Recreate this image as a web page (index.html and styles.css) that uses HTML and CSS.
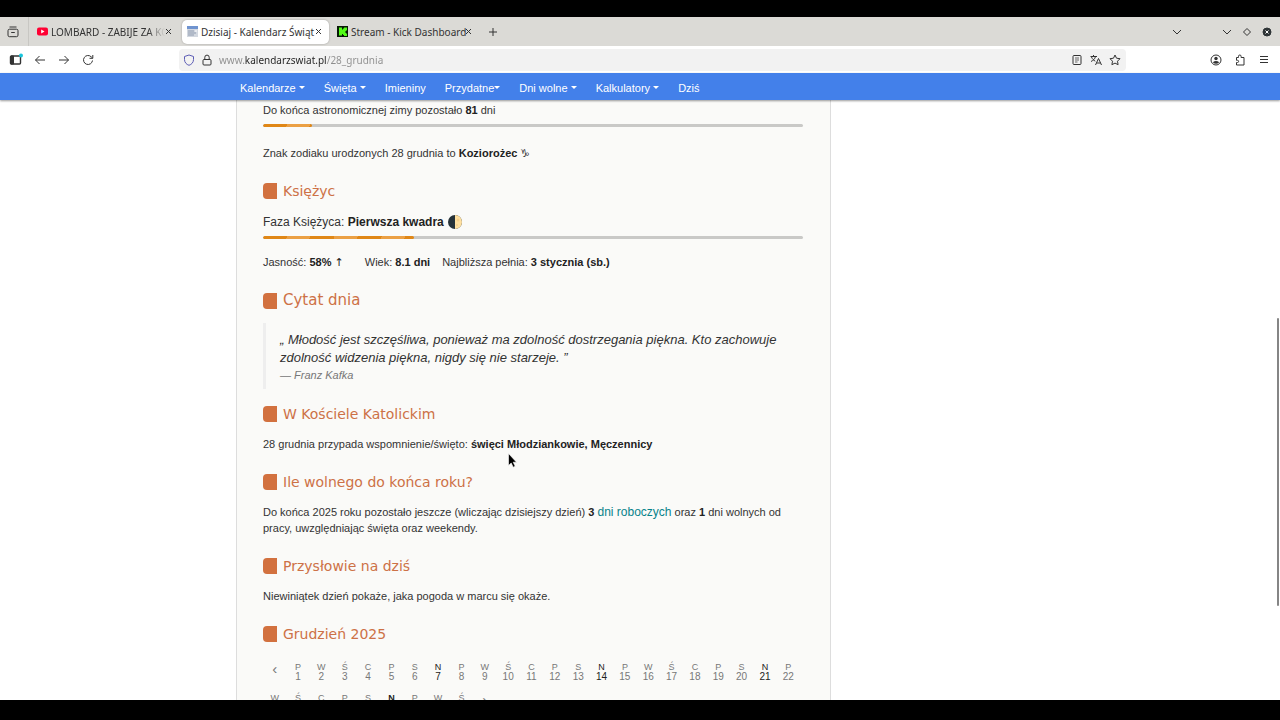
FILE: index.html
```
<!DOCTYPE html>
<html lang="pl">
<head>
  <meta charset="UTF-8" />
  <meta name="viewport" content="width=device-width, initial-scale=1" />
  <title>Dzisiaj - Kalendarz Świąt</title>
  <link rel="stylesheet" href="styles.css">
</head>
<body>

  <div class="browser">
    <div class="tabbar">
      <button class="icon-btn all-tabs" aria-label="Karty">
        <svg width="12" height="12" viewBox="0 0 12 12"><path d="M2.500 1h7M2.500 3.200h7A1.500 1.500 0 0 1 11 4.700v4.500a1.500 1.500 0 0 1-1.500 1.500h-7A1.500 1.500 0 0 1 1 9.200V4.700a1.500 1.500 0 0 1 1.500-1.500zM4.200 6.500h3.600"/></svg>
      </button>
      <div class="tab">
        <svg class="favicon" width="11" height="11" viewBox="0 0 11 11"><rect x="0" y="1.500" width="11" height="8" rx="2" fill="#f03"/><path d="M4.200 3.500v4l3.300-2z" fill="#fff"/></svg>
        <button class="tab-title fade">LOMBARD - ZABIJE ZA KO</button>
        <button class="close" aria-label="Zamknij"><svg width="7" height="7" viewBox="0 0 7 7"><path d="M1 1l5 5M6 1l-5 5"/></svg></button>
      </div>
      <div class="tab active">
        <svg class="favicon" width="11" height="11" viewBox="0 0 11 11"><rect width="11" height="11" fill="#d3d8e0"/><rect width="11" height="3" fill="#6f93cf"/><path d="M1 5h6M1 7h8M1 9h6" stroke="#8f9bb0"/><path d="M8 5h2" stroke="#fff"/></svg>
        <button class="tab-title">Dzisiaj - Kalendarz Świąt</button>
        <button class="close" aria-label="Zamknij"><svg width="7" height="7" viewBox="0 0 7 7"><path d="M1 1l5 5M6 1l-5 5"/></svg></button>
      </div>
      <div class="tab">
        <svg class="favicon" width="11" height="11" viewBox="0 0 11 11"><rect width="11" height="11" fill="#071a05"/><path d="M2 1.500h3v2h1v-1h1v-1h3v3H9v1H8v1h1v1h1v2.500H7v-1H6v-1H5v1.500H2z" fill="#53fc18"/></svg>
        <button class="tab-title">Stream - Kick Dashboard</button>
        <button class="close" aria-label="Zamknij"><svg width="7" height="7" viewBox="0 0 7 7"><path d="M1 1l5 5M6 1l-5 5"/></svg></button>
      </div>
      <button class="icon-btn new-tab" aria-label="Nowa karta">
        <svg width="10" height="10" viewBox="0 0 10 10"><path d="M5 1v8M1 5h8"/></svg>
      </button>
      <div class="window-controls">
        <button class="icon-btn list-tabs" aria-label="Lista kart"><svg width="10" height="10" viewBox="0 0 10 10"><path d="M1 3l4 4 4-4"/></svg></button>
        <button class="icon-btn" aria-label="Minimalizuj"><svg width="10" height="10" viewBox="0 0 10 10"><path d="M1 3l4 4 4-4"/></svg></button>
        <button class="icon-btn" aria-label="Maksymalizuj"><svg width="10" height="10" viewBox="0 0 10 10"><path d="M5 1.500L8.500 5 5 8.500 1.500 5z"/></svg></button>
        <button class="icon-btn" aria-label="Zamknij okno"><svg width="10" height="10" viewBox="0 0 10 10"><circle cx="5" cy="5" r="4" fill="#2e3436" stroke="#2e3436"/><path d="M3.500 3.500l3 3M6.500 3.500l-3 3" stroke="#fff"/></svg></button>
      </div>
    </div>

    <div class="toolbar">
      <div class="tool-group">
        <button class="icon-btn" aria-label="Panel boczny"><svg width="14" height="14" viewBox="0 0 14 14"><rect x="1.500" y="3" width="10" height="8" rx="1" stroke-width="1.400"/><path d="M2 3h2.500v8H2z" fill="#333"/><circle cx="12" cy="2.500" r="2" fill="#19c5dc" stroke="none"/></svg></button>
        <button class="icon-btn" aria-label="Wstecz"><svg width="12" height="12" viewBox="0 0 12 12"><path d="M11 6H1.500M5.500 2l-4 4 4 4"/></svg></button>
        <button class="icon-btn" aria-label="Dalej"><svg width="12" height="12" viewBox="0 0 12 12"><path d="M1 6h9.500M6.500 2l4 4-4 4"/></svg></button>
        <button class="icon-btn" aria-label="Odśwież"><svg width="12" height="12" viewBox="0 0 12 12"><path d="M10.500 6.500A4.500 4.500 0 1 1 9.300 2.900L10.500 4M10.800 1v3.300H7.500"/></svg></button>
      </div>
      <div class="urlbar">
        <svg width="12" height="12" viewBox="0 0 12 12"><path d="M6 1l4.500 1.500v3C10.500 8.500 8.500 10.500 6 11.300 3.500 10.500 1.500 8.500 1.500 5.500v-3z" stroke="#5b5bb5"/></svg>
        <svg class="lock" width="12" height="12" viewBox="0 0 12 12"><rect x="2" y="5.500" width="8" height="5.500" rx="1"/><path d="M3.800 5.500V3.300a2.200 2.200 0 0 1 4.400 0v2.200"/></svg>
        <input class="url" type="text" aria-label="Adres" value="www.kalendarzswiat.pl/28_grudnia">
        <div class="url-actions">
          <svg width="12" height="12" viewBox="0 0 12 12"><rect x="2" y="1.500" width="8" height="9" rx="1"/><path d="M4 4h4M4 6h4M4 8h2.500" stroke="#666"/></svg>
          <svg width="12" height="12" viewBox="0 0 12 12"><path d="M.500 2.500h6.500M3.500 1v1.500M5.500 2.500C5 5 3 6.500 1 7.500M1.500 3c.8 2 2 3.200 3.800 4.200M5.500 11l3-6.500 3 6.500M6.600 9h3.800"/></svg>
          <svg width="12" height="12" viewBox="0 0 12 12"><path d="M6 1l1.500 3.200 3.500.5-2.500 2.500.6 3.500L6 9.100l-3.100 1.600.6-3.500L1 4.700l3.500-.5z"/></svg>
        </div>
      </div>
      <div class="tool-group right">
        <button class="icon-btn" aria-label="Konto"><svg width="12" height="12" viewBox="0 0 12 12"><circle cx="6" cy="6" r="5"/><circle cx="6" cy="4.500" r="1.700" fill="#333" stroke="none"/><path d="M2.800 8.200Q6 5.800 9.200 8.200 6 11.500 2.800 8.200z" fill="#333" stroke="none"/></svg></button>
        <button class="icon-btn" aria-label="Rozszerzenia"><svg width="12" height="12" viewBox="0 0 12 12"><path d="M2.500 3.500h2V2.300a1.300 1.300 0 0 1 2.600 0v1.200H10v7.500H2.500V8.500h1a1.100 1.100 0 0 0 0-2.200h-1z"/></svg></button>
        <button class="icon-btn" aria-label="Menu"><svg width="12" height="12" viewBox="0 0 12 12"><path d="M2 2.500h8M2 5.500h8M2 8.500h8"/></svg></button>
      </div>
    </div>

    <nav class="navbar">
      <div class="container nav-items">
        <button class="nav-link">Kalendarze <span class="caret"></span></button>
        <button class="nav-link">Święta <span class="caret"></span></button>
        <a class="nav-link" href="#">Imieniny</a>
        <button class="nav-link">Przydatne<span class="caret"></span></button>
        <button class="nav-link">Dni wolne <span class="caret"></span></button>
        <button class="nav-link">Kalkulatory <span class="caret"></span></button>
        <a class="nav-link" href="#">Dziś</a>
      </div>
    </nav>

    <div class="page">
      <div class="container">
        <main class="content">
          <p class="winter">Do końca astronomicznej zimy pozostało <b>81</b> dni</p>
          <div class="progress"><div class="progress-bar" style="width: 9%"></div></div>
          <p class="zodiac">Znak zodiaku urodzonych 28 grudnia to <b>Koziorożec</b> ♑&#xFE0E;</p>

          <h2>Księżyc</h2>
          <p class="phase">Faza Księżyca: <b>Pierwsza kwadra</b>
            <svg class="moon" width="14" height="14" viewBox="0 0 14 14"><circle cx="7" cy="7" r="7" fill="#263238"/><path d="M7 0a7 7 0 0 1 0 14z" fill="#ffe0a0"/><circle cx="10" cy="5" r="1.500" fill="#f5d08c"/><circle cx="9" cy="10" r="1" fill="#f5d08c"/></svg>
          </p>
          <div class="progress"><div class="progress-bar" style="width: 28%"></div></div>
          <p class="moon-info">
            <span class="light">Jasność: <b>58% <span class="arrow-up">↑</span></b></span>
            <span class="age">Wiek: <b>8.1 dni</b></span>
            <span>Najbliższa pełnia: <b>3 stycznia (sb.)</b></span>
          </p>

          <h2 class="quote-title">Cytat dnia</h2>
          <blockquote>
            „ Młodość jest szczęśliwa, ponieważ ma zdolność dostrzegania piękna. Kto zachowuje zdolność widzenia piękna, nigdy się nie starzeje. ”
            <footer>— Franz Kafka</footer>
          </blockquote>

          <h2>W Kościele Katolickim</h2>
          <p>28 grudnia przypada wspomnienie/święto: <b>święci Młodziankowie, Męczennicy</b></p>

          <h2>Ile wolnego do końca roku?</h2>
          <p>Do końca 2025 roku pozostało jeszcze (wliczając dzisiejszy dzień) <b>3</b> <a class="workdays" href="#">dni roboczych</a> oraz <b>1</b> dni wolnych od pracy, uwzględniając święta oraz weekendy.</p>

          <h2>Przysłowie na dziś</h2>
          <p>Niewiniątek dzień pokaże, jaka pogoda w marcu się okaże.</p>

          <h2>Grudzień 2025</h2>
          <div class="days" id="days"></div>
        </main>
      </div>
    </div>

    <div class="scrollbar"></div>
    <svg class="cursor" width="9" height="15" viewBox="0 0 9 15"><path d="M.500.500v12l2.700-2.500 2 4.200 2-1-2-4h3.300z" fill="#000" stroke="#fff" stroke-width=".6"/></svg>
  </div>

  <script src="script.js"></script>
</body>
</html>
```
FILE: styles.css
```
body {
  margin: 0;
  background-color: #000;
  font-family: "Liberation Sans", Arial, sans-serif;
  font-size: 11px;
  line-height: 16px;
  color: #333;
}
* {
  box-sizing: border-box;
}
button {
  border: none;
  background: none;
  padding: 0;
  font: inherit;
  color: inherit;
  cursor: pointer;
}
svg {
  flex: none;
  fill: none;
  stroke: #333;
}

/* Browser window */
.browser {
  position: relative;
  display: flex;
  flex-direction: column;
  height: 100vh;
  padding: 17px 0 20px;
}
.tabbar,
.toolbar {
  display: flex;
  align-items: center;
  flex: none;
  font-family: "Noto Sans", sans-serif;
  font-size: 10px;
}
.tabbar {
  height: 29px;
  background-color: #dbdad6;
}
.icon-btn {
  display: flex;
  align-items: center;
  justify-content: center;
  width: 24px;
  height: 24px;
}
.all-tabs {
  width: 29px;
  height: 29px;
  padding-right: 2px;
  border-right: 1px solid #c8c7c3;
}
.tab {
  display: flex;
  align-items: center;
  width: 147px;
  height: 24px;
  margin-left: 3px;
  padding: 0 7px 0 5px;
  border-radius: 5px;
}
.tab.active {
  background-color: #fff;
  box-shadow: 0 0 2px rgba(0, 0, 0, 0.3);
}
.favicon {
  margin-right: 3px;
  stroke: none;
}
.tab-title {
  flex: 1;
  min-width: 0;
  text-align: left;
  white-space: nowrap;
}
.fade {
  -webkit-mask-image: linear-gradient(to right, #000 85%, transparent);
  mask-image: linear-gradient(to right, #000 85%, transparent);
}
.close {
  display: flex;
}
.new-tab {
  margin-left: 2px;
}
.window-controls {
  display: flex;
  margin-left: auto;
  padding-right: 3px;
}
.window-controls .icon-btn {
  width: 20px;
}
.window-controls .list-tabs {
  margin-right: 30px;
}
.toolbar {
  height: 27px;
  background-color: #fff;
}
.tool-group {
  display: flex;
  width: 179px;
  padding-left: 4px;
}
.tool-group.right {
  justify-content: flex-end;
  width: 154px;
  padding: 0 4px 0 0;
}
.urlbar {
  display: flex;
  align-items: center;
  flex: 1;
  height: 22px;
  padding: 0 5px 0 4px;
  border-radius: 4px;
  background-color: #f2f2f2;
}
.lock {
  margin: 0 6px;
}
.url {
  flex: 1;
  height: 22px;
  padding: 0;
  border: none;
  outline: none;
  font: inherit;
  color: transparent;
  background-image: linear-gradient(to right, #8d8d8d 26px, #222 26px, #222 108px, #8d8d8d 108px);
  -webkit-background-clip: text;
  background-clip: text;
}
.url-actions {
  display: flex;
  gap: 7px;
}

/* Navigation */
.container {
  max-width: 808px;
  margin: 0 auto;
}
.navbar {
  position: relative;
  flex: none;
  background-color: #4380ea;
  box-shadow: 0 1px 2px rgba(0, 0, 0, 0.4);
}
.nav-items {
  display: flex;
  gap: 19px;
  padding: 2px 4px 0;
}
.nav-link {
  display: flex;
  align-items: center;
  height: 25px;
  color: #fff;
  text-decoration: none;
  white-space: pre;
}
.caret {
  border: 3px solid transparent;
  border-top-color: #fff;
  border-bottom: none;
}

/* Page */
.page {
  flex: 1;
  min-height: 0;
  overflow: hidden;
  background-color: #fff;
}
.content {
  max-width: 595px;
  padding: 2px 27px 20px 26px;
  border: 1px solid #ddd;
  border-top: none;
  background-color: #fafaf8;
}
p {
  margin: 0 0 20px;
}
b {
  color: #222;
}
h2 {
  display: flex;
  align-items: center;
  gap: 6px;
  margin: 0 0 12px;
  font-family: "DejaVu Sans", sans-serif;
  font-size: 14px;
  font-weight: normal;
  line-height: 20px;
  color: #cd7146;
}
h2::before {
  content: "";
  width: 14px;
  height: 16px;
  border-radius: 4px 0 0 4px;
  background-color: #d2713f;
}
.quote-title {
  font-size: 15px;
  line-height: 21px;
}
.winter {
  margin-bottom: 6px;
}
.phase {
  margin-bottom: 5px;
  font-size: 12px;
  line-height: 18px;
}
.progress {
  height: 3px;
  margin-bottom: 15px;
  border-radius: 2px;
  background-color: #c9c9c7;
  overflow: hidden;
}
.progress-bar {
  height: 3px;
  border-radius: 2px;
  background-image: repeating-linear-gradient(115deg, #e08716 0, #e08716 22px, #eba044 22px, #eba044 43px);
}
.zodiac {
  padding-top: 3px;
}
.moon {
  vertical-align: -3px;
  margin-left: 1px;
  stroke: none;
}
.moon-info {
  display: flex;
}
.light {
  margin-right: 21px;
}
.age {
  margin-right: 12px;
}
.arrow-up {
  font-family: "DejaVu Sans", sans-serif;
  font-weight: normal;
  line-height: 1;
}
blockquote {
  margin: 0 0 15px;
  padding: 8px 14px 6px;
  border-left: 3px solid #eee;
  font-size: 13px;
  font-style: italic;
  line-height: 18px;
}
blockquote footer {
  font-size: 11px;
  line-height: 16px;
  color: #777;
}
.workdays {
  font-size: 12px;
  color: #08838b;
  text-decoration: none;
}
.days {
  display: grid;
  grid-template-columns: repeat(23, 1fr);
  row-gap: 13px;
  padding: 7px 3px 0 0;
}
.day {
  font-size: 10px;
  line-height: 9px;
  text-align: center;
  text-decoration: none;
  color: #777;
}
.day span {
  display: block;
  font-size: 9px;
}
.day.sunday {
  color: #222;
}
.day.today {
  font-weight: bold;
}
.day.arrow {
  font-size: 15px;
  line-height: 12px;
}

/* Overlays */
.scrollbar {
  position: absolute;
  top: 318px;
  right: 1px;
  width: 2px;
  height: 288px;
  border-radius: 1px;
  background-color: #858585;
}
.cursor {
  position: absolute;
  top: 453px;
  left: 508px;
}
```
FILE: script.js
```
const days = document.getElementById('days');
const names = ['P', 'W', 'Ś', 'C', 'P', 'S', 'N'];

function addItem(className, html) {
  const a = document.createElement('a');
  a.href = '#';
  a.className = className;
  a.innerHTML = html;
  days.appendChild(a);
}

addItem('day arrow', '‹');
for (let i = 1; i <= 31; i++) {
  let className = 'day';
  if (i % 7 === 0) className += ' sunday';
  if (i === 28) className += ' today';
  addItem(className, '<span>' + names[(i - 1) % 7] + '</span>' + i);
}
addItem('day arrow', '›');
```
